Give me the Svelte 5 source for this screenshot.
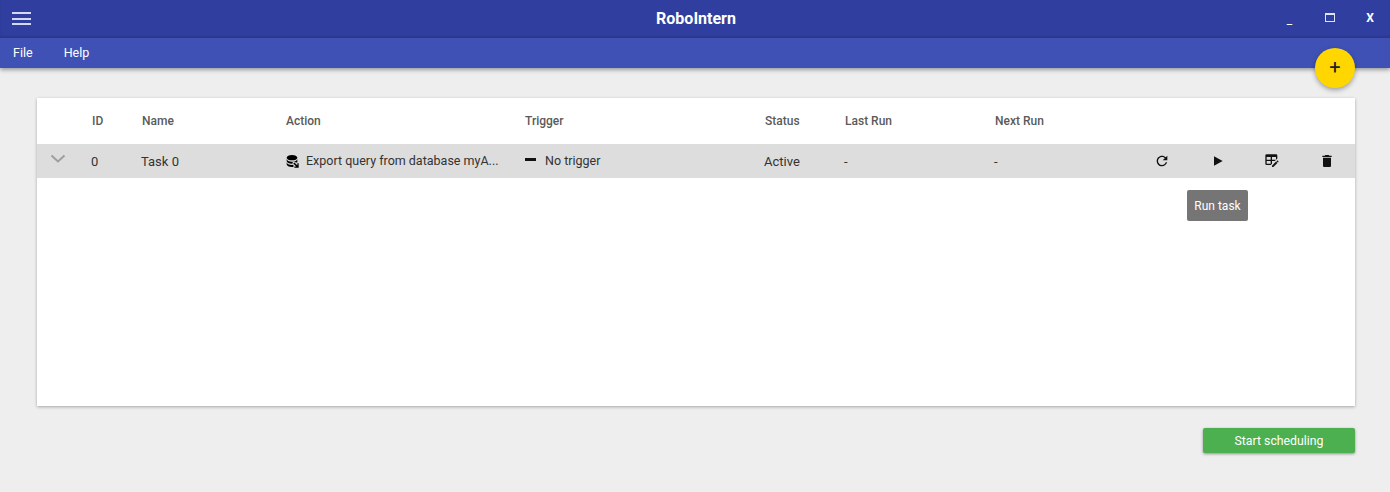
<script>
  const columns = ['ID', 'Name', 'Action', 'Trigger', 'Status', 'Last Run', 'Next Run'];
</script>

<div class="page">
  <header class="appbar">
    <div class="titlebar">
      <button class="menu-btn" aria-label="Menu">
        <span></span><span></span><span></span>
      </button>
      <div class="title">RoboIntern</div>
      <div class="win-controls">
        <span class="win min">_</span>
        <span class="win"><i class="max"></i></span>
        <span class="win close">X</span>
      </div>
    </div>
    <nav class="menubar">
      <span>File</span>
      <span>Help</span>
    </nav>
  </header>

  <button class="fab" aria-label="Add task">+</button>

  <main class="content">
    <section class="card">
      <div class="grid head">
        <div></div>
        {#each columns as col}
          <div class="th">{col}</div>
        {/each}
      </div>
      <div class="grid row">
        <div class="chevron">
          <svg width="16" height="10" viewBox="0 0 16 10"><path d="M1.500 1.500 8 7.500l6.500-6" fill="none" stroke="#9e9e9e" stroke-width="2"/></svg>
        </div>
        <div>0</div>
        <div>Task 0</div>
        <div class="with-icon action">
          <svg class="db" width="16" height="16" viewBox="0 0 24 24">
            <path d="M12 3C7.600 3 4 4.800 4 7s3.600 4 8 4 8-1.800 8-4-3.600-4-8-4z" />
            <path d="M4 9v3c0 2.200 3.600 4 8 4l1.300-.1-.9-.9 2.900-2.900 2.200 2.200H20V9c0 2.200-3.600 4-8 4S4 11.200 4 9z" />
            <path d="M4 14v3c0 2.200 3.600 4 8 4l2.200-.1V17.800l-2.200.2c-4.400 0-8-1.800-8-4z" />
            <path d="M15.300 14.300 13.900 15.700l4.400 4.400h-2.800V22H22v-6.500h-2v2.900z" />
          </svg>
          <span>Export query from database myA...</span>
        </div>
        <div class="with-icon trigger">
          <i class="dash"></i>
          <span>No trigger</span>
        </div>
        <div>Active</div>
        <div>-</div>
        <div>-</div>
        <div class="actions">
          <svg width="16" height="16" viewBox="0 0 24 24"><path d="M17.650 6.350C16.200 4.900 14.210 4 12 4c-4.420 0-7.990 3.580-7.990 8s3.570 8 7.990 8c3.730 0 6.840-2.550 7.730-6h-2.080c-.82 2.330-3.040 4-5.650 4-3.310 0-6-2.690-6-6s2.690-6 6-6c1.660 0 3.140.69 4.220 1.780L13 11h7V4l-2.350 2.350z"/></svg>
          <svg class="play" width="16" height="16" viewBox="0 0 24 24"><path d="M6 5v14l13-7z"/></svg>
          <svg class="edit" width="16" height="16" viewBox="0 0 24 24"><path d="M21.700 13.350L20.700 14.350L18.650 12.300L19.650 11.300C19.860 11.090 20.210 11.090 20.420 11.300L21.700 12.580C21.910 12.790 21.910 13.140 21.700 13.350M12 18.940L18.060 12.880L20.110 14.930L14.060 21H12V18.940M4 2H18A2 2 0 0 1 20 4V8.170L16.170 12H12V16.170L10.170 18H4A2 2 0 0 1 2 16V4A2 2 0 0 1 4 2M4 6V10H10V6H4M12 6V10H18V6H12M4 12V16H10V12H4Z"/></svg>
          <svg class="trash" width="16" height="16" viewBox="0 0 24 24"><path d="M6 19c0 1.100.9 2 2 2h8c1.100 0 2-.9 2-2V7H6v12zM19 4h-3.500l-1-1h-5l-1 1H5v2h14V4z"/></svg>
        </div>
      </div>
      <div class="tooltip">Run task</div>
    </section>

    <div class="footer">
      <button class="start">Start scheduling</button>
    </div>
  </main>
</div>

<style>
  :global(body) {
    margin: 0;
    background: #eee;
    font-family: Roboto, "Liberation Sans", sans-serif;
  }

  .page {
    position: relative;
    height: 492px;
    overflow: hidden;
    background: #eee;
  }

  .appbar {
    box-shadow: 0 2px 4px rgba(0, 0, 0, 0.35);
  }

  .titlebar {
    position: relative;
    display: flex;
    align-items: center;
    justify-content: space-between;
    height: 38px;
    background: #303f9f;
    box-shadow: inset 0 -2px 2px rgba(0, 0, 0, 0.12);
  }

  .menu-btn {
    display: flex;
    flex-direction: column;
    gap: 3.500px;
    margin: 0 0 1px 12px;
    padding: 0;
    border: 0;
    background: none;
  }

  .menu-btn span {
    display: block;
    width: 19px;
    height: 2px;
    background: #d5d9f0;
  }

  .title {
    position: absolute;
    left: 0;
    right: 0;
    padding: 0 0 2px 2px;
    text-align: center;
    color: #fff;
    font-size: 16px;
    font-weight: 700;
    pointer-events: none;
  }

  .win-controls {
    display: flex;
    align-items: center;
    color: #fff;
    font-size: 12px;
  }

  .win {
    display: flex;
    justify-content: center;
    width: 40px;
  }

  .min {
    width: 41px;
    margin: 2px 0 0;
    line-height: 14px;
  }

  .max {
    display: block;
    box-sizing: border-box;
    width: 10px;
    height: 9px;
    margin-bottom: 4px;
    border: 1px solid #dfe2f5;
    border-top-width: 2px;
  }

  .close {
    font-weight: 700;
    margin-bottom: 3px;
  }

  .menubar {
    display: flex;
    align-items: center;
    gap: 31px;
    height: 30px;
    padding: 0 0 2px 13px;
    box-sizing: border-box;
    background: #3f51b5;
    color: #fff;
    font-size: 12.500px;
  }

  .fab {
    position: absolute;
    left: 1315px;
    top: 48px;
    width: 40px;
    height: 40px;
    padding: 0 0 2px;
    border: 0;
    border-radius: 50%;
    background: #ffd600;
    box-shadow: 0 2px 5px rgba(0, 0, 0, 0.35);
    color: #222;
    font-family: inherit;
    font-size: 20px;
    font-weight: 400;
    line-height: 1;
  }

  .content {
    padding: 30px 35px 0 37px;
  }

  .card {
    position: relative;
    height: 308px;
    background: #fff;
    box-shadow: 0 1px 3px rgba(0, 0, 0, 0.3);
  }

  .grid {
    display: grid;
    grid-template-columns: 54px 50px 144px 239px 240px 80px 150px 150px 1fr;
    align-items: center;
  }

  .head {
    height: 46px;
    color: #5a5a5a;
    font-size: 12px;
    font-weight: 500;
  }

  .th {
    padding-left: 1px;
  }

  .row {
    height: 34px;
    background: #ddd;
    color: #333;
    font-size: 13px;
  }

  .chevron {
    display: flex;
    padding: 0 0 5px 13px;
  }

  .with-icon {
    display: flex;
    align-items: center;
    gap: 6px;
    padding: 0 0 2px 1px;
    font-size: 12.500px;
    white-space: nowrap;
  }

  .db {
    margin: 2px 0 0 -2px;
  }

  .trigger {
    gap: 9px;
  }

  .dash {
    display: block;
    width: 11px;
    height: 3px;
    margin-bottom: 2px;
    background: #111;
  }

  .actions {
    display: flex;
    align-items: center;
    padding: 0 0 1px 10px;
  }

  .actions svg {
    fill: #111;
  }

  .play { margin-left: 40px; }
  .edit { margin-left: 38px; }
  .trash { margin-left: 39px; }

  .tooltip {
    position: absolute;
    left: 1150px;
    top: 92px;
    width: 61px;
    height: 31px;
    border-radius: 2px;
    background: #757575;
    color: #fff;
    font-size: 12px;
    line-height: 32px;
    text-align: center;
  }

  .footer {
    display: flex;
    justify-content: flex-end;
    margin-top: 22px;
  }

  .start {
    width: 152px;
    height: 25px;
    padding: 0;
    border: 0;
    border-radius: 2px;
    background: #4caf50;
    box-shadow: 0 1px 3px rgba(0, 0, 0, 0.4);
    color: #fff;
    font-family: inherit;
    font-size: 12.300px;
    font-weight: 400;
  }
</style>
